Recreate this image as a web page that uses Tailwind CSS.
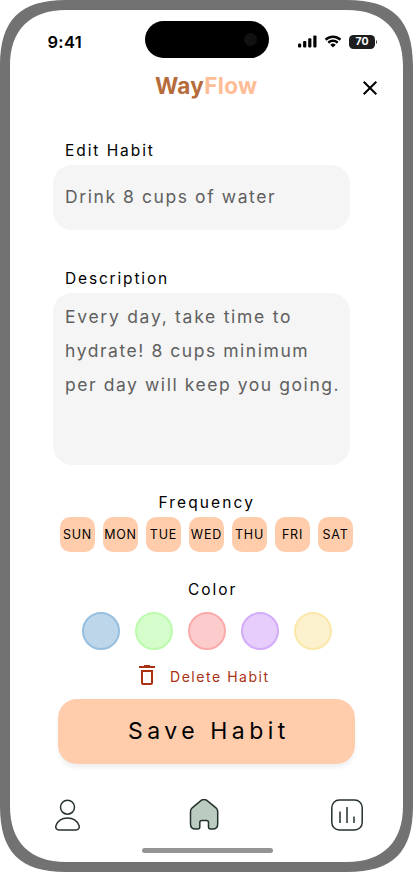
<!DOCTYPE html>
<html lang="en">
<head>
<meta charset="utf-8">
<title>WayFlow – Edit Habit</title>
<script src="https://cdn.jsdelivr.net/npm/@tailwindcss/browser@4"></script>
</head>
<body class="bg-white">
<div class="relative w-[413px] h-[872px] overflow-hidden font-['Inter','Liberation_Sans',sans-serif] text-black">
  <!-- Phone bezel -->
  <svg class="absolute inset-0" width="413" height="872" viewBox="0 0 413 872">
    <path fill="#727272" fill-rule="evenodd" d="M0 66C0 20 20 0 66 0H347C393 0 413 20 413 66V806C413 852 393 872 347 872H66C20 872 0 852 0 806ZM10 66C10 30 30 10 66 10H347C383 10 403 30 403 66V806C403 842 383 862 347 862H66C30 862 10 842 10 806Z"/>
  </svg>
  <div class="relative flex flex-col h-full px-[10px] pt-[21px]">
    <!-- Status bar -->
    <header class="flex h-[37px] items-center">
      <div class="w-[135px] pl-[37.5px] pt-[5px] text-[16.5px] leading-[20px] font-semibold tracking-[0.3px]">9:41</div>
      <div class="flex w-[124px] h-[37px] items-center justify-end rounded-full bg-black pr-[12px]"><span class="size-[13px] rounded-full bg-[#111]"></span></div>
      <div class="flex items-center pl-[29px] pt-[4px]">
        <svg width="19" height="13" viewBox="0 0 19 13"><rect x="0" y="8.6" width="3.2" height="3.9" rx="1"/><rect x="5.1" y="6" width="3.2" height="6.5" rx="1"/><rect x="10.2" y="3.3" width="3.2" height="9.2" rx="1"/><rect x="15.3" y=".5" width="3.2" height="12" rx="1"/></svg>
        <svg class="ml-[7px]" width="18" height="13" viewBox="0 0 18 13"><path d="M9 2.9c2.4 0 4.6.9 6.3 2.5.1.1.3.1.5 0l1.2-1.3c.1-.1.1-.4 0-.5C12.5-.5 5.5-.5 1 3.6c-.1.1-.1.4 0 .5l1.2 1.3c.2.1.4.1.5 0C4.4 3.8 6.6 2.9 9 2.9zM9 7c1.3 0 2.6.5 3.5 1.4.2.1.4.1.5 0l1.3-1.4c.1-.1.1-.3 0-.5-3-2.8-7.6-2.8-10.6 0-.1.2-.1.4 0 .5L5 8.4c.1.1.3.1.5 0C6.4 7.5 7.7 7 9 7zM11.5 9.9c.1-.1.1-.3 0-.4-1.4-1.2-3.6-1.2-5 0-.1.1-.1.3 0 .4l2.3 2.3c.1.2.3.2.4 0z"/></svg>
        <div class="ml-[7px] flex w-[26px] h-[14px] items-center justify-center rounded-[4.5px] bg-[#1d1d1f] text-[10.5px] font-bold leading-[14px] text-white">70</div>
        <svg width="3" height="6" viewBox="0 0 3 6"><path fill="#333" d="M1 1C2.4 1.5 2.4 4.5 1 5Z"/></svg>
      </div>
    </header>
    <!-- Brand and close -->
    <div class="flex h-[56px] items-center">
      <h1 class="w-[352px] pl-[145px] text-[22.5px] leading-[28px] font-bold tracking-[0.3px] text-[#ffbd97]"><span class="text-[#b66b3a]">Way</span>Flow</h1>
      <svg class="mt-[3px]" width="16" height="16" viewBox="0 0 16 16" fill="none" stroke="#000" stroke-width="2"><path d="M1.7 1.7 14.3 14.3M14.3 1.7 1.7 14.3"/></svg>
    </div>
    <!-- Form -->
    <div class="mt-[24px] flex flex-col pl-[43px]">
      <label class="h-[27px] pl-[12px] text-[15.5px] leading-[26px] tracking-[1.93px]">Edit Habit</label>
      <div class="flex h-[65px] w-[297px] items-center rounded-[19px] bg-[#f5f5f5] pl-[12px] text-[17.5px] tracking-[1.58px] text-[#606060]">Drink 8 cups of water</div>
      <label class="mt-[36px] h-[27px] pl-[12px] text-[15.5px] leading-[26px] tracking-[1.83px]">Description</label>
      <div class="h-[172px] w-[297px] rounded-[19px] bg-[#f5f5f5] pl-[12px] pt-[7px] text-[17.5px] leading-[34px] whitespace-nowrap text-[#606060]">
        <p class="tracking-[1.72px]">Every day, take time to</p>
        <p class="tracking-[1.55px]">hydrate! 8 cups minimum</p>
        <p class="tracking-[1.56px]">per day will keep you going.</p>
      </div>
    </div>
    <h2 class="mt-[25px] h-[27px] pl-[148.5px] text-[15.5px] leading-[26px] tracking-[2.12px]">Frequency</h2>
    <div class="flex gap-[8px] pl-[50px] text-[12.5px] leading-[35px] tracking-[0.8px] text-center whitespace-nowrap">
      <div class="flex size-[35px] justify-center rounded-[10px] bg-[#ffcdac]">SUN</div>
      <div class="flex size-[35px] justify-center rounded-[10px] bg-[#ffcdac]">MON</div>
      <div class="flex size-[35px] justify-center rounded-[10px] bg-[#ffcdac]">TUE</div>
      <div class="flex size-[35px] justify-center rounded-[10px] bg-[#ffcdac]">WED</div>
      <div class="flex size-[35px] justify-center rounded-[10px] bg-[#ffcdac]">THU</div>
      <div class="flex size-[35px] justify-center rounded-[10px] bg-[#ffcdac]">FRI</div>
      <div class="flex size-[35px] justify-center rounded-[10px] bg-[#ffcdac]">SAT</div>
    </div>
    <h2 class="mt-[25px] h-[35px] pl-[178px] text-[15.5px] leading-[26px] tracking-[1.95px]">Color</h2>
    <div class="flex gap-[15px] pl-[72px]">
      <span class="size-[38px] rounded-full border-2 border-[#96bfe0] bg-[#bdd6ea]"></span>
      <span class="size-[38px] rounded-full border-2 border-[#bcfbad] bg-[#d5fccb]"></span>
      <span class="size-[38px] rounded-full border-2 border-[#fbaaa9] bg-[#fbcccb]"></span>
      <span class="size-[38px] rounded-full border-2 border-[#d3acf9] bg-[#e6cdfb]"></span>
      <span class="size-[38px] rounded-full border-2 border-[#fbe8a9] bg-[#fcf1cd]"></span>
    </div>
    <div class="mt-[14px] flex h-[24px] items-start pl-[129px] text-[#ab3113]">
      <svg class="mt-[1px]" width="16" height="20" viewBox="0 0 16 20" fill="currentColor"><path fill-rule="evenodd" d="M5 0H11V1H16V3H0V1H5ZM2 5H14V18a2 2 0 0 1-2 2H4a2 2 0 0 1-2-2ZM4 7V18H12V7Z"/></svg>
      <span class="ml-[15px] text-[14px] leading-[26px] tracking-[1.54px]">Delete Habit</span>
    </div>
    <button class="mt-[11px] ml-[48px] h-[65px] w-[297px] rounded-[19px] bg-[#ffcdac] pl-[70px] text-left text-[23px] tracking-[4.5px] shadow-[0_4px_4px_rgba(0,0,0,0.06)]">Save Habit</button>
    <!-- Bottom navigation -->
    <nav class="mt-[35px] flex h-[32px] items-start pl-[45px]">
      <svg width="25" height="32" viewBox="0 0 25 32" fill="none" stroke="#26312c" stroke-width="1.5"><circle cx="12.5" cy="8.2" r="7"/><path d="M12.5 19C18 19 22.2 22 24 26.5C24.7 29 23.5 31 21 31H4C1.5 31 .3 29 1 26.5C2.8 22 7 19 12.5 19Z"/></svg>
      <svg class="ml-[109px]" width="30" height="32" viewBox="0 0 30 32" fill="#b9ccbf" stroke="#26312c" stroke-width="1.5" stroke-linejoin="round"><path d="M12.500 1.200Q15 -.2 17.500 1.200L27 8.800Q28.700 10.200 28.700 12.500V25Q28.700 30 23.700 30H21.500Q19.500 30 19.500 28V23.500Q19.500 21.500 17.500 21.500H12.800Q10.800 21.500 10.800 23.500V28Q10.800 30 8.800 30H6.500Q1.500 30 1.500 25V12.500Q1.500 10.200 3.200 8.800Z"/></svg>
      <svg class="ml-[112px]" width="32" height="32" viewBox="0 0 32 32" fill="none" stroke="#26312c" stroke-width="1.5"><rect x=".8" y="1" width="30.4" height="30" rx="7.5"/><path d="M9 12.500V24M16 8V24M23 17.500V24" stroke-linecap="butt"/></svg>
    </nav>
    <div class="mt-[17px] ml-[132px] h-[5px] w-[131px] rounded-full bg-[#949494]"></div>
  </div>
</div>
</body>
</html>
